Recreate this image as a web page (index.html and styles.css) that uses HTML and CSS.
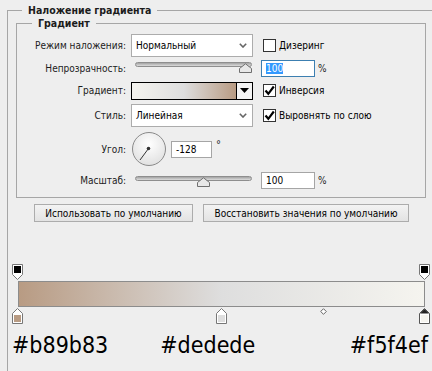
FILE: index.html
```html
<!DOCTYPE html>
<html lang="ru">
<head>
<meta charset="utf-8">
<title>Наложение градиента</title>
<link rel="stylesheet" href="styles.css">
</head>
<body>
<fieldset class="outer">
  <legend>Наложение градиента</legend>
  <fieldset class="inner">
    <legend>Градиент</legend>
    <div class="row r1">
      <span class="label">Режим наложения:</span>
      <div class="select"><span>Нормальный</span><svg class="chev" width="8" height="5" viewBox="0 0 8 5"><path d="M0.8 0.8L4 4L7.2 0.8" fill="none" stroke="#666" stroke-width="1.6"/></svg></div>
      <label class="check"><span class="box"></span>Дизеринг</label>
    </div>
    <div class="row r2">
      <span class="label">Непрозрачность:</span>
      <div class="slider"><div class="track"></div><svg class="thumb" style="left:104px" width="13" height="10" viewBox="0 0 13 10"><path d="M0.5 9.5V5.5L6.5 0.8L12.5 5.5V9.5Z" fill="#e8e8e8" stroke="#6f6f6f"/></svg></div>
      <div class="num focus"><span class="sel">100</span></div>
      <span class="unit">%</span>
    </div>
    <div class="row r3">
      <span class="label">Градиент:</span>
      <div class="swatch"><div class="grad"></div><div class="drop"><svg width="9" height="5" viewBox="0 0 9 5"><path d="M0 0H9L4.5 5Z" fill="#000"/></svg></div></div>
      <label class="check"><span class="box"><svg width="11" height="11" viewBox="0 0 11 11"><path d="M1.5 5.5L4.3 8.8L9.8 1.5" fill="none" stroke="#000" stroke-width="2.2"/></svg></span>Инверсия</label>
    </div>
    <div class="row r4">
      <span class="label">Стиль:</span>
      <div class="select"><span>Линейная</span><svg class="chev" width="8" height="5" viewBox="0 0 8 5"><path d="M0.8 0.8L4 4L7.2 0.8" fill="none" stroke="#666" stroke-width="1.6"/></svg></div>
      <label class="check"><span class="box"><svg width="11" height="11" viewBox="0 0 11 11"><path d="M1.5 5.5L4.3 8.8L9.8 1.5" fill="none" stroke="#000" stroke-width="2.2"/></svg></span>Выровнять по слою</label>
    </div>
    <div class="row r5">
      <span class="label">Угол:</span>
      <div class="dial"><svg width="34" height="34" viewBox="0 0 34 34"><line x1="16.5" y1="16.5" x2="8" y2="28" stroke="#333" stroke-width="1"/><circle cx="16.5" cy="16.5" r="1.8" fill="#333"/></svg></div>
      <div class="num angle">-128</div>
      <span class="deg">°</span>
    </div>
    <div class="row r6">
      <span class="label">Масштаб:</span>
      <div class="slider"><div class="track"></div><svg class="thumb" style="left:62px" width="13" height="10" viewBox="0 0 13 10"><path d="M0.5 9.5V5.5L6.5 0.8L12.5 5.5V9.5Z" fill="#e8e8e8" stroke="#6f6f6f"/></svg></div>
      <div class="num">100</div>
      <span class="unit">%</span>
    </div>
  </fieldset>
  <div class="buttons">
    <button class="btn b1">Использовать по умолчанию</button>
    <button class="btn b2">Восстановить значения по умолчанию</button>
  </div>
  <div class="editor">
    <div class="stops top">
      <svg class="stop" style="left:0%" width="11" height="16" viewBox="0 0 11 16"><path d="M0.5 0.5H10.5V10.5L5.5 15.5L0.5 10.5Z" fill="#fff" stroke="#777"/><rect x="2" y="2" width="7" height="7" fill="#000"/></svg>
      <svg class="stop" style="left:100%" width="11" height="16" viewBox="0 0 11 16"><path d="M0.5 0.5H10.5V10.5L5.5 15.5L0.5 10.5Z" fill="#fff" stroke="#777"/><rect x="2" y="2" width="7" height="7" fill="#000"/></svg>
    </div>
    <div class="bar"></div>
    <div class="stops bottom">
      <svg class="stop" style="left:0%" width="11" height="16" viewBox="0 0 11 16"><path d="M0.5 15.5V5.5L5.5 0.5L10.5 5.5V15.5Z" fill="#fff" stroke="#777"/><rect x="2" y="7" width="7" height="7" fill="#b89b83"/></svg>
      <svg class="stop" style="left:50%" width="11" height="16" viewBox="0 0 11 16"><path d="M0.5 15.5V5.5L5.5 0.5L10.5 5.5V15.5Z" fill="#fff" stroke="#777"/><rect x="2" y="7" width="7" height="7" fill="#dedede"/></svg>
      <svg class="mid" style="left:75%" width="7" height="7" viewBox="0 0 7 7"><path d="M3.5 0.7L6.3 3.5L3.5 6.3L0.7 3.5Z" fill="#fff" stroke="#666"/></svg>
      <svg class="stop" style="left:100%" width="11" height="16" viewBox="0 0 11 16"><path d="M0.5 15.5V5.5L5.5 0.5L10.5 5.5V15.5Z" fill="#fff" stroke="#555"/><path d="M1 5.5L5.5 1L10 5.5Z" fill="#222"/><rect x="2" y="7" width="7" height="7" fill="#f5f4ef"/></svg>
    </div>
  </div>
  <div class="hexes">
    <span class="hex">#b89b83</span>
    <span class="hex h2">#dedede</span>
    <span class="hex h3">#f5f4ef</span>
  </div>
</fieldset>
</body>
</html>
```
FILE: styles.css
```css
* { box-sizing: border-box; }
html, body { margin: 0; padding: 0; }
body {
  width: 432px;
  height: 371px;
  overflow: hidden;
  background: #eeeeee;
  font-family: "DejaVu Sans Condensed", "DejaVu Sans", sans-serif;
  font-size: 10px;
  color: #1c1c1c;
}
.outer {
  margin: 4px 0 0 7px;
  padding: 0;
  border: 1px solid #a6a6a6;
  width: 480px;
  min-height: 420px;
}
.outer > legend {
  margin-left: 14px;
  padding: 0 6px;
  font-weight: bold;
  font-size: 10.5px;
  line-height: 12px;
}
.inner {
  margin: 1px 0 0 8px;
  padding: 4px 0 6px 0;
  border: 1px solid #a6a6a6;
  width: 410px;
}
.inner > legend {
  margin-left: 15px;
  padding: 0 6px;
  font-weight: bold;
  font-size: 10.5px;
  line-height: 12px;
}
.row { display: flex; align-items: center; }
.r1 { height: 24px; }
.r2 { height: 23px; }
.r3 { height: 21px; }
.r4 { height: 28px; }
.r5 { height: 40px; }
.r6 { height: 22px; }
.label {
  flex: none;
  width: 109px;
  margin-right: 5px;
  text-align: right;
}
.select {
  flex: none;
  width: 122px;
  height: 23px;
  background: #fff;
  border: 1px solid #acacac;
  display: flex;
  align-items: center;
  justify-content: space-between;
  padding: 0 5px 0 4px;
  color: #000;
}
.check {
  display: flex;
  align-items: center;
  margin-left: 10px;
  color: #000;
}
.box {
  width: 13px;
  height: 13px;
  border: 1px solid #333;
  background: #fff;
  margin-right: 3px;
  display: flex;
  align-items: center;
  justify-content: center;
}
.slider {
  position: relative;
  flex: none;
  width: 117px;
  height: 12px;
  margin-left: 4px;
}
.track {
  height: 5px;
  border: 1px solid #8e8e8e;
  border-radius: 3px;
  background: linear-gradient(#a3a3a3, #dcdcdc);
}
.thumb { position: absolute; top: 1px; }
.num {
  flex: none;
  width: 54px;
  height: 17px;
  margin-left: 9px;
  background: #fff;
  border: 1px solid #a5a5a5;
  padding-left: 4px;
  line-height: 15px;
  color: #000;
}
.num.focus { border-color: #3c7fb1; }
.sel { background: #3399ff; color: #fff; }
.unit { margin-left: 3px; }
.r2 .slider { margin-top: -2px; }
.r6 .slider { margin-top: 4px; }
.swatch {
  flex: none;
  width: 122px;
  height: 18px;
  border: 1px solid #000;
  display: flex;
  background: #fff;
}
.grad {
  flex: 1;
  background: linear-gradient(to right, #f5f4ef, #dedede 50%, #b89b83);
}
.drop {
  width: 16px;
  border-left: 1px solid #000;
  display: flex;
  align-items: center;
  justify-content: center;
  background: #f4f4f4;
}
.dial {
  flex: none;
  width: 34px;
  height: 34px;
  margin-left: 1px;
  border: 1px solid #8a8a8a;
  border-radius: 50%;
  background: radial-gradient(circle at 50% 35%, #ffffff, #dadada);
  overflow: hidden;
}
.dial svg { display: block; margin: -1px 0 0 -1px; }
.num.angle { width: 41px; margin-left: 5px; }
.deg { margin-left: 4px; align-self: flex-start; margin-top: 9px; font-size: 11px; color: #222; }
.buttons {
  display: flex;
  gap: 10px;
  margin: 6px 0 0 26px;
}
.btn {
  height: 18px;
  padding: 0;
  border: 1px solid #acacac;
  background: linear-gradient(#f3f3f3, #e3e3e3);
  font: inherit;
  color: #000;
}
.b1 { width: 159px; }
.b2 { width: 206px; }
.editor {
  width: 407px;
  margin: 42px 0 0 10px;
}
.stops { position: relative; height: 17px; }
.stop { position: absolute; margin-left: -6px; }
.top .stop { top: 0; }
.bottom .stop { top: 1px; }
.mid { position: absolute; top: 1px; margin-left: -3px; }
.bar {
  height: 26px;
  border: 1px solid #8c8c8c;
  background: linear-gradient(to right, #b89b83, #dedede 50%, #f5f4ef);
}
.hexes {
  display: flex;
  width: 416px;
  margin: 8px 0 0 4px;
  font-size: 23px;
  line-height: 27px;
  color: #000;
}
.h2 { margin-left: 52px; }
.h3 { margin-left: auto; }
```
